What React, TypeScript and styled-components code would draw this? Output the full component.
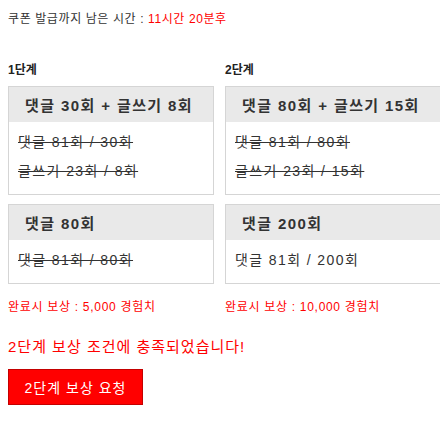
import styled, { createGlobalStyle } from "styled-components";

const GlobalStyle = createGlobalStyle`
  body {
    margin: 8px;
    background: #fff;
    font-family: "Liberation Sans", "Noto Sans CJK KR", sans-serif;
    color: #333;
  }
`;

const Page = styled.div`
  display: flex;
  flex-direction: column;
`;

const Timer = styled.div`
  font-size: 12px;
  line-height: 22px;
  letter-spacing: 0.6px;
  color: #333;
`;

const Red = styled.span`
  color: #ff0000;
`;

const Stages = styled.div`
  display: grid;
  grid-template-columns: 206px 216px;
  column-gap: 11px;
  margin-top: 30px;
`;

const Column = styled.div`
  display: flex;
  flex-direction: column;
`;

const StageLabel = styled.div`
  font-size: 12px;
  font-weight: bold;
  line-height: 20px;
  color: #222;
  margin-bottom: 6px;
`;

const Box = styled.div`
  border: 1px solid #d5d5d5;
  margin-bottom: 9px;
`;

const BoxHeader = styled.div`
  background: #e9e9e9;
  height: 35px;
  display: flex;
  align-items: center;
  padding-left: 16px;
  font-size: 15px;
  font-weight: bold;
  letter-spacing: 1.4px;
  color: #333;
  white-space: nowrap;
`;

const BoxBody = styled.div`
  padding: 6px 9px 8px;
`;

const Line = styled.div<{ $done?: boolean }>`
  font-size: 14px;
  line-height: 29px;
  letter-spacing: 1.4px;
  color: #333;
  white-space: nowrap;
  text-decoration: ${(p) => (p.$done ? "line-through" : "none")};
`;

const Reward = styled.div`
  font-size: 12px;
  line-height: 20px;
  letter-spacing: 0.7px;
  color: #ff0000;
  margin-top: 4px;
`;

const Message = styled.div`
  font-size: 15px;
  line-height: 22px;
  letter-spacing: 1px;
  color: #ff0000;
  margin-top: 19px;
`;

const Button = styled.button`
  margin-top: 11px;
  width: 135px;
  height: 36px;
  background: #ff0000;
  border: 1px solid #c40000;
  color: #fff;
  font-family: inherit;
  font-size: 14px;
  letter-spacing: 1px;
  cursor: pointer;
`;

type Goal = { title: string; lines: { text: string; done: boolean }[] };

const stages: { label: string; goals: Goal[]; reward: string }[] = [
  {
    label: "1단계",
    goals: [
      {
        title: "댓글 30회 + 글쓰기 8회",
        lines: [
          { text: "댓글 81회 / 30회", done: true },
          { text: "글쓰기 23회 / 8회", done: true },
        ],
      },
      { title: "댓글 80회", lines: [{ text: "댓글 81회 / 80회", done: true }] },
    ],
    reward: "5,000",
  },
  {
    label: "2단계",
    goals: [
      {
        title: "댓글 80회 + 글쓰기 15회",
        lines: [
          { text: "댓글 81회 / 80회", done: true },
          { text: "글쓰기 23회 / 15회", done: true },
        ],
      },
      { title: "댓글 200회", lines: [{ text: "댓글 81회 / 200회", done: false }] },
    ],
    reward: "10,000",
  },
];

export default function App() {
  return (
    <Page>
      <GlobalStyle />
      <Timer>
        쿠폰 발급까지 남은 시간 : <Red>11시간 20분후</Red>
      </Timer>
      <Stages>
        {stages.map((s) => (
          <Column key={s.label}>
            <StageLabel>{s.label}</StageLabel>
            {s.goals.map((g) => (
              <Box key={g.title}>
                <BoxHeader>{g.title}</BoxHeader>
                <BoxBody>
                  {g.lines.map((l) => (
                    <Line key={l.text} $done={l.done}>
                      {l.text}
                    </Line>
                  ))}
                </BoxBody>
              </Box>
            ))}
            <Reward>완료시 보상 : {s.reward} 경험치</Reward>
          </Column>
        ))}
      </Stages>
      <Message>2단계 보상 조건에 충족되었습니다!</Message>
      <div>
        <Button>2단계 보상 요청</Button>
      </div>
    </Page>
  );
}
